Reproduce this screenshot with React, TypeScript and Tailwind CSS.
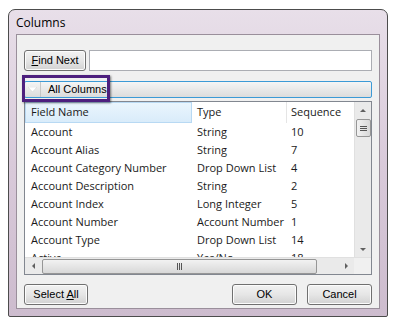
import { useState } from "react"

const rows = [
  ["Account", "String", "10"],
  ["Account Alias", "String", "7"],
  ["Account Category Number", "Drop Down List", "4"],
  ["Account Description", "String", "2"],
  ["Account Index", "Long Integer", "5"],
  ["Account Number", "Account Number", "1"],
  ["Account Type", "Drop Down List", "14"],
  ["Active", "Yes/No", "18"],
]

const btn =
  "h-[21px] rounded-[3px] border border-[#707070] bg-gradient-to-b from-[#f2f2f2] via-[#e6e6e6] to-[#d2d2d2] text-[11px] text-black shadow-[inset_0_0_0_1px_#fcfcfc] flex items-center justify-center"

const WinButton = ({ label, ul, className }: { label: string; ul?: number; className: string }) => (
  <button className={`${btn} ${className}`}>
    {ul === undefined ? (
      label
    ) : (
      <span>
        {label.slice(0, ul)}
        <span className="underline">{label[ul]}</span>
        {label.slice(ul + 1)}
      </span>
    )}
  </button>
)

const Arrow = ({ dir }: { dir: "up" | "down" | "left" | "right" }) => {
  const pts = {
    up: "1,5 4,2 7,5",
    down: "1,3 4,6 7,3",
    left: "5,1 2,4 5,7",
    right: "3,1 6,4 3,7",
  }[dir]
  return (
    <svg width="8" height="8" viewBox="0 0 8 8">
      <polygon points={pts} fill="#606060" />
    </svg>
  )
}

const ColumnsDialog = () => {
  const [search, setSearch] = useState("")
  return (
    <div className="w-[397px] h-[329px] bg-white pt-[9px] pl-[8px] font-['Liberation_Sans',sans-serif]">
      <div className="w-[380px] h-[308px] rounded-t-[7px] rounded-b-[2px] border border-[#4c4c4c] bg-gradient-to-b from-[#e8dfe9] via-[#d9cada] to-[#cdbcce] px-[7px] pb-[7px] flex flex-col">
        <div className="h-[26px] flex items-center pt-[1px] text-[12px] text-black font-['Open_Sans',sans-serif]">Columns</div>
        <div className="flex-1 border border-[#9a8f9b] bg-[#f0f0f0] px-[7px] pt-[15px] pb-[3px] flex flex-col">
          <div className="flex gap-[3px]">
            <WinButton label="Find Next" ul={0} className="w-[62px]" />
            <input
              value={search}
              onChange={(e) => setSearch(e.target.value)}
              className="flex-1 h-[21px] border border-[#abadb3] bg-white outline-none px-1 text-[11px]"
            />
          </div>

          <div className="relative mt-[10px] flex flex-col">
            <div className="h-[17px] rounded-[2px] border border-[#3c9ad6] bg-gradient-to-b from-[#f5f5f5] to-[#dcdcdc] flex items-center text-[11px]">
              <div className="w-[16px] h-full flex items-center justify-center border-r border-[#c6c6c6]">
                <svg width="9" height="6" viewBox="0 0 9 6">
                  <polygon points="0,0 9,0 4.5,5" fill="#ffffff" stroke="#d0d0d0" strokeWidth="0.5" />
                </svg>
              </div>
              <span className="ml-[7px]">All Columns</span>
            </div>

            <div className="absolute left-[-2px] top-[-6px] w-[88px] h-[27px] border-[3px] border-[#4d1f7e] shadow-[1px_1px_2px_rgba(0,0,0,0.5)]" />

            <div className="mt-[3px] h-[174px] border border-[#828790] bg-white flex flex-col">
              <div className="flex flex-1 min-h-0">
                <div className="flex-1 flex flex-col min-w-0 font-['Open_Sans',sans-serif] text-[11px] text-[#1a1a1a]">
                  <div className="h-[21px] flex shrink-0">
                    <div className="w-[167px] flex items-center pl-[5px] bg-gradient-to-b from-[#eaf5fd] to-[#d9ecfa] border border-[#b8d9f3]">Field Name</div>
                    <div className="w-[95px] flex items-center pl-[5px] border-r border-[#e5e5e5]">Type</div>
                    <div className="flex-1 flex items-center pl-[4px]">Sequence</div>
                  </div>
                  <div className="flex-1 overflow-hidden">
                    {rows.map(([name, type, seq]) => (
                      <div key={name} className="h-[18px] flex items-center bg-white">
                        <div className="w-[167px] pl-[6px] whitespace-nowrap">{name}</div>
                        <div className="w-[95px] pl-[5px] whitespace-nowrap">{type}</div>
                        <div className="flex-1 pl-[4px]">{seq}</div>
                      </div>
                    ))}
                  </div>
                </div>
                <div className="w-[17px] bg-[#eaeaea] border-l border-[#e0e0e0] flex flex-col items-center">
                  <div className="h-[17px] flex items-center justify-center">
                    <Arrow dir="up" />
                  </div>
                  <div className="w-[15px] h-[18px] rounded-[2px] border border-[#969696] bg-gradient-to-r from-[#f2f2f2] to-[#d8d8d8] flex flex-col items-center justify-center gap-[1px]">
                    <div className="w-[7px] h-[1px] bg-[#555]" />
                    <div className="w-[7px] h-[1px] bg-[#555]" />
                    <div className="w-[7px] h-[1px] bg-[#555]" />
                  </div>
                  <div className="flex-1" />
                  <div className="h-[17px] flex items-center justify-center">
                    <Arrow dir="down" />
                  </div>
                </div>
              </div>
              <div className="h-[17px] flex bg-[#eaeaea] border-t border-[#e0e0e0]">
                <div className="w-[17px] flex items-center justify-center">
                  <Arrow dir="left" />
                </div>
                <div className="flex-1 flex items-center">
                  <div className="w-[275px] h-[15px] rounded-[2px] border border-[#969696] bg-gradient-to-b from-[#f2f2f2] to-[#d8d8d8] flex items-center justify-center gap-[1px]">
                    <div className="w-[1px] h-[7px] bg-[#555]" />
                    <div className="w-[1px] h-[7px] bg-[#555]" />
                    <div className="w-[1px] h-[7px] bg-[#555]" />
                  </div>
                </div>
                <div className="w-[17px] flex items-center justify-center">
                  <Arrow dir="right" />
                </div>
                <div className="w-[17px] bg-[#f0f0f0]" />
              </div>
            </div>
          </div>

          <div className="mt-[9px] flex">
            <WinButton label="Select All" ul={7} className="w-[64px]" />
            <div className="flex-1" />
            <WinButton label="OK" className="w-[65px]" />
            <WinButton label="Cancel" className="w-[65px] ml-[10px]" />
          </div>
        </div>
      </div>
    </div>
  )
}

export default function App() {
  return <ColumnsDialog />
}
